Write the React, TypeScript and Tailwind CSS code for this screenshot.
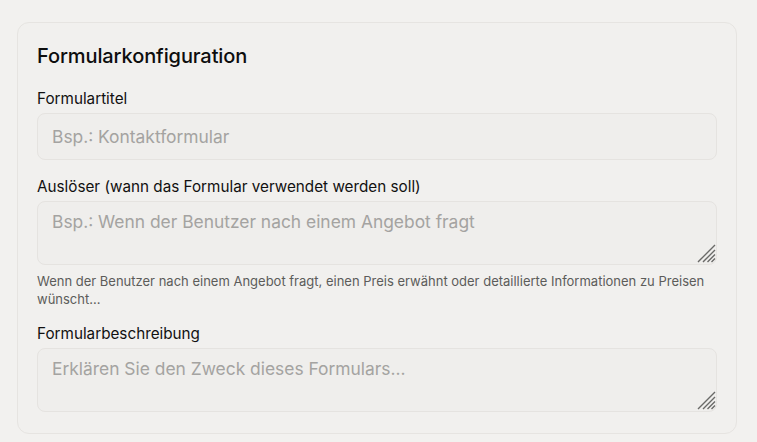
const Field = ({ label, children }: { label: string; children: React.ReactNode }) => (
    <div className="flex flex-col">
        <label className="text-[15.25px] leading-[20px] text-[#111] mb-[4px]">{label}</label>
        {children}
    </div>
);

const Grip = () => (
    <svg
        width="19"
        height="19"
        viewBox="0 0 19 19"
        className="pointer-events-none absolute right-[1px] bottom-[2px]"
        stroke="#6a6a68"
        strokeWidth="1.4"
        fill="none"
    >
        <path d="M1 18 18 1M6 18 18 6M10.5 18 18 10.5M14.5 18 18 14.5" />
    </svg>
);

const Area = ({ placeholder }: { placeholder: string }) => (
    <div className="relative">
        <textarea
            placeholder={placeholder}
            className="block h-[64px] w-full resize-none rounded-[8px] border border-[#e5e3e0] bg-[#efeeec] px-[14px] pt-[8px] pb-[6px] text-[17.4px] leading-[24px] text-[#111] outline-none placeholder:text-[#a4a3a1]"
        />
        <Grip />
    </div>
);

const App = () => {
    return (
        <div
            className="min-h-screen w-full bg-[#f2f1ef] pt-[22px] pl-[17px]"
            style={{ fontFamily: "Inter, 'Liberation Sans', sans-serif" }}
        >
            <div className="w-[720px] rounded-[12px] border border-[#e6e4e1] bg-[#f1f0ee] px-[19px] pt-[19px] pb-[21px]">
                <h2 className="text-[20px] leading-[28px] font-medium text-[#0d0d0d] tracking-[-0.1px] mb-[19px]">
                    Formularkonfiguration
                </h2>
                <div className="flex flex-col gap-[18px]">
                    <Field label="Formulartitel">
                        <input
                            type="text"
                            placeholder="Bsp.: Kontaktformular"
                            className="h-[47px] w-full rounded-[8px] border border-[#e5e3e0] bg-[#efeeec] px-[14px] text-[17.4px] text-[#111] outline-none placeholder:text-[#a4a3a1]"
                        />
                    </Field>
                    <div className="flex flex-col -mt-[1px]">
                        <Field label="Auslöser (wann das Formular verwendet werden soll)">
                            <Area placeholder="Bsp.: Wenn der Benutzer nach einem Angebot fragt" />
                        </Field>
                        <p className="mt-[7px] text-[13px] leading-[18px] text-[#5c5c5a]">
                            Wenn der Benutzer nach einem Angebot fragt, einen Preis erwähnt oder detaillierte Informationen zu Preisen wünscht...
                        </p>
                    </div>
                    <div className="-mt-[2px]">
                        <Field label="Formularbeschreibung">
                            <Area placeholder="Erklären Sie den Zweck dieses Formulars..." />
                        </Field>
                    </div>
                </div>
            </div>
        </div>
    );
};

export default App;
